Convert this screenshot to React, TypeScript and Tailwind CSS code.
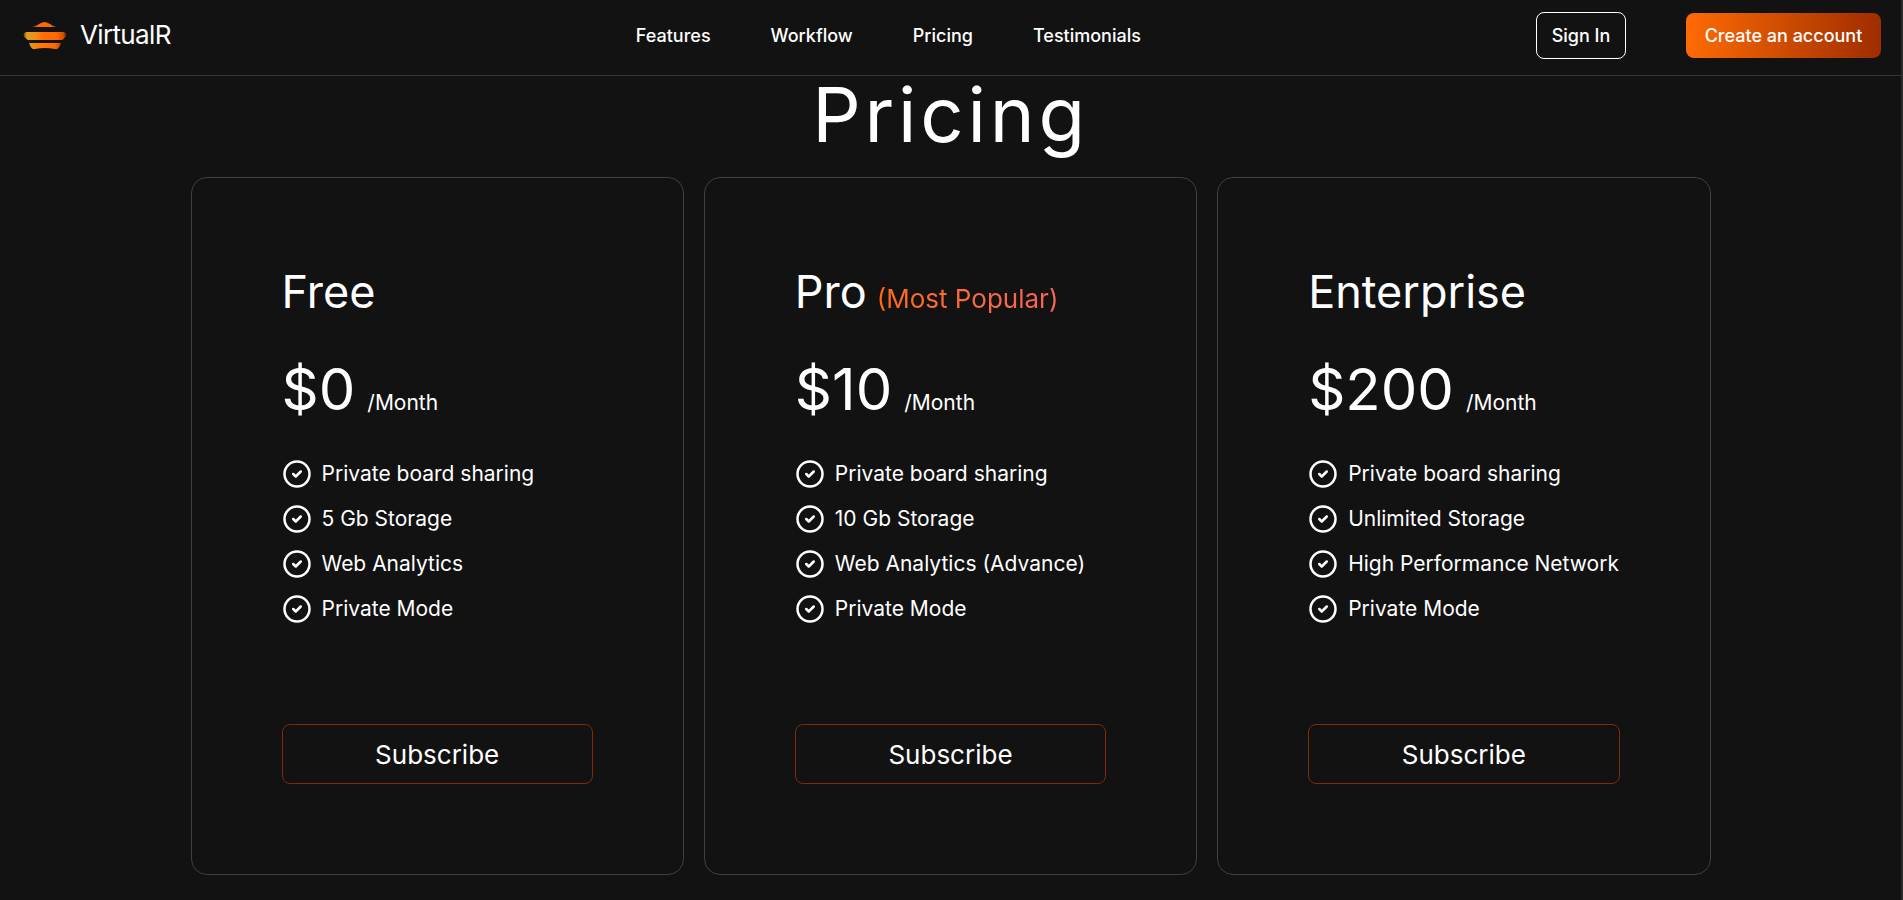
import { CircleCheck } from "lucide-react";

type Plan = {
  title: string;
  price: string;
  popular?: boolean;
  features: string[];
};

const navItems = [
  { label: "Features", href: "#features" },
  { label: "Workflow", href: "#workflow" },
  { label: "Pricing", href: "#pricing" },
  { label: "Testimonials", href: "#testimonials" },
];

const plans: Plan[] = [
  {
    title: "Free",
    price: "$0",
    features: [
      "Private board sharing",
      "5 Gb Storage",
      "Web Analytics",
      "Private Mode",
    ],
  },
  {
    title: "Pro",
    price: "$10",
    popular: true,
    features: [
      "Private board sharing",
      "10 Gb Storage",
      "Web Analytics (Advance)",
      "Private Mode",
    ],
  },
  {
    title: "Enterprise",
    price: "$200",
    features: [
      "Private board sharing",
      "Unlimited Storage",
      "High Performance Network",
      "Private Mode",
    ],
  },
];

function Logo() {
  return (
    <svg width="46" height="28" viewBox="0 0 46 28" aria-hidden="true">
      <defs>
        <linearGradient id="top" x1="0" y1="0" x2="1" y2="0">
          <stop offset="0" stopColor="#8a3a08" />
          <stop offset="0.25" stopColor="#ff6a00" />
          <stop offset="0.75" stopColor="#ff6a00" />
          <stop offset="1" stopColor="#7a2c05" />
        </linearGradient>
        <linearGradient id="middle" x1="0" y1="0" x2="1" y2="0">
          <stop offset="0" stopColor="#6b3a10" />
          <stop offset="0.08" stopColor="#dba11c" />
          <stop offset="0.3" stopColor="#f08c18" />
          <stop offset="0.45" stopColor="#ff6e05" />
          <stop offset="0.75" stopColor="#ff6a00" />
          <stop offset="0.92" stopColor="#d94f00" />
          <stop offset="1" stopColor="#4a1c08" />
        </linearGradient>
        <linearGradient id="bottom" x1="0" y1="0" x2="1" y2="0">
          <stop offset="0" stopColor="#d99a1c" />
          <stop offset="0.3" stopColor="#ff7a0a" />
          <stop offset="0.8" stopColor="#ff6a00" />
          <stop offset="1" stopColor="#b84400" />
        </linearGradient>
      </defs>
      <path d="M10 5 Q15 3.5 18 1.5 Q22.5 -1.5 27 1.5 Q30 3.5 35 5 Z" fill="url(#top)" />
      <path d="M4 10 H42 Q45 11.5 44.5 13 Q44 15 42 16.5 Q41 18 39 18 H7 Q5 18 4 16.5 Q2 15 1.5 13 Q1 11.5 4 10 Z" fill="url(#middle)" />
      <path d="M7 21 H39 Q38 24 36.5 26 Q35.5 27.5 33 27 Q28 26 23 26 Q18 26 13 27 Q10.5 27.5 9.5 26 Q8 24 7 21 Z" fill="url(#bottom)" />
    </svg>
  );
}

function Navbar() {
  return (
    <nav className="border-b border-neutral-700/80 text-lg font-medium">
      <div className="flex h-[75px] items-center justify-between pr-5 pb-1 pl-[22px]">
        <a href="#" className="flex items-center gap-3">
          <Logo />
          <span className="text-[26px] font-normal tracking-tight">VirtualR</span>
        </a>
        <ul className="ml-[70px] flex gap-[60px]">
          {navItems.map((item) => (
            <li key={item.label}>
              <a href={item.href}>{item.label}</a>
            </li>
          ))}
        </ul>
        <div className="flex items-center gap-[60px]">
          <a
            href="#signin"
            className="flex h-[47px] w-[90px] items-center justify-center rounded-lg border border-white"
          >
            Sign In
          </a>
          <a
            href="#signup"
            className="flex h-[45px] w-[195px] items-center justify-center rounded-lg bg-linear-to-r from-[#ff6b05] to-[#9f2d00]"
          >
            Create an account
          </a>
        </div>
      </div>
    </nav>
  );
}

function PlanCard({ plan }: { plan: Plan }) {
  return (
    <div className="rounded-2xl border border-neutral-700 p-[90px]">
      <h3 className="text-[45px] leading-[48px] whitespace-nowrap">
        {plan.title}
        {plan.popular && (
          <span className="ml-2.5 bg-linear-to-r from-[#ff6b05] to-[#f8655a] bg-clip-text text-[26px] leading-none text-transparent">
            (Most Popular)
          </span>
        )}
      </h3>
      <p className="mt-9 flex items-baseline gap-3">
        <span className="text-[58px] leading-[75px]">{plan.price}</span>
        <span className="text-[21px] leading-[30px]">/Month</span>
      </p>
      <ul className="mt-8 flex flex-col gap-[15px]">
        {plan.features.map((feature) => (
          <li key={feature} className="flex items-center gap-2.5 whitespace-nowrap">
            <CircleCheck size={30} />
            <span className="text-[21px] leading-[30px]">{feature}</span>
          </li>
        ))}
      </ul>
      <button
        type="button"
        className="mt-[100px] h-[60px] w-full rounded-lg border border-orange-900 text-[26px]"
      >
        Subscribe
      </button>
    </div>
  );
}

export default function App() {
  return (
    <div className="min-h-screen border-r-2 border-[#2b2b2b] bg-[#121212] font-[Inter,sans-serif] text-white">
      <Navbar />
      <section id="pricing" className="mx-auto max-w-[1600px] px-10">
        <h2 className="mb-[25px] text-center text-[76px] leading-[76px] tracking-wider">
          Pricing
        </h2>
        <div className="grid grid-cols-3 gap-5 pb-[26px]">
          {plans.map((plan) => (
            <PlanCard key={plan.title} plan={plan} />
          ))}
        </div>
      </section>
    </div>
  );
}
